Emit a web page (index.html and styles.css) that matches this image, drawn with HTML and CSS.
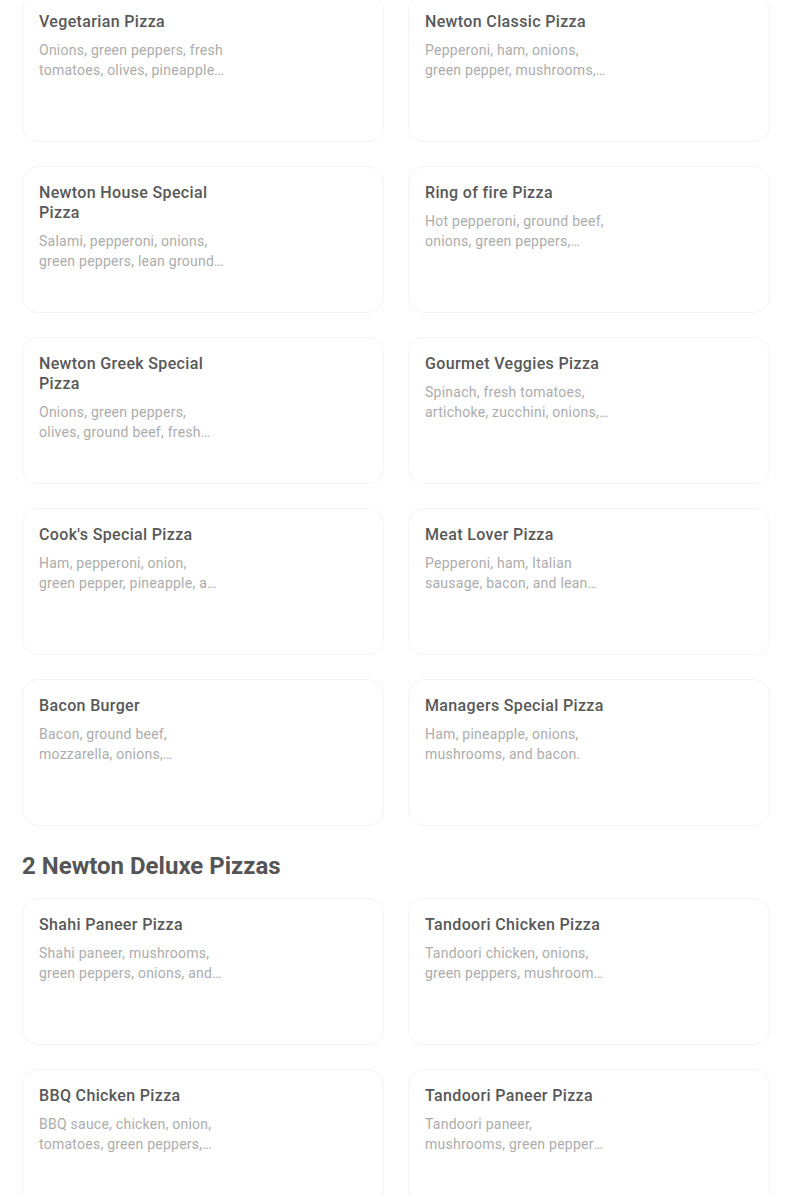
FILE: index.html
```html
<!DOCTYPE html>
<html lang="en">
<head>
<meta charset="utf-8">
<title>Menu</title>
<link rel="stylesheet" href="styles.css">
</head>
<body>
<main class="menu">
  <section class="section">
    <ul class="grid grid-first">
      <li class="card"><div class="card-text"><h3 class="item-title">Vegetarian Pizza</h3><p class="item-desc">Onions, green peppers, fresh tomatoes, olives, pineapple, and mushrooms.</p></div></li>
      <li class="card"><div class="card-text"><h3 class="item-title">Newton Classic Pizza</h3><p class="item-desc">Pepperoni, ham, onions, green pepper, mushrooms, and ground beef.</p></div></li>
      <li class="card"><div class="card-text"><h3 class="item-title">Newton House Special Pizza</h3><p class="item-desc">Salami, pepperoni, onions, green peppers, lean ground beef, and mushrooms.</p></div></li>
      <li class="card"><div class="card-text"><h3 class="item-title">Ring of fire Pizza</h3><p class="item-desc">Hot pepperoni, ground beef, onions, green peppers, jalapeños, and hot sauce.</p></div></li>
      <li class="card"><div class="card-text"><h3 class="item-title">Newton Greek Special Pizza</h3><p class="item-desc">Onions, green peppers, olives, ground beef, fresh tomatoes, and feta cheese.</p></div></li>
      <li class="card"><div class="card-text"><h3 class="item-title">Gourmet Veggies Pizza</h3><p class="item-desc">Spinach, fresh tomatoes, artichoke, zucchini, onions, and mushrooms.</p></div></li>
      <li class="card"><div class="card-text"><h3 class="item-title">Cook's Special Pizza</h3><p class="item-desc">Ham, pepperoni, onion, green pepper, pineapple, and mushrooms.</p></div></li>
      <li class="card"><div class="card-text"><h3 class="item-title">Meat Lover Pizza</h3><p class="item-desc">Pepperoni, ham, Italian sausage, bacon, and lean ground beef.</p></div></li>
      <li class="card"><div class="card-text"><h3 class="item-title">Bacon Burger</h3><p class="item-desc">Bacon, ground beef, mozzarella, onions, tomatoes, and pickles.</p></div></li>
      <li class="card"><div class="card-text"><h3 class="item-title">Managers Special Pizza</h3><p class="item-desc">Ham, pineapple, onions, mushrooms, and bacon.</p></div></li>
    </ul>
  </section>
  <section class="section">
    <h2 class="section-title">2 Newton Deluxe Pizzas</h2>
    <ul class="grid">
      <li class="card"><div class="card-text"><h3 class="item-title">Shahi Paneer Pizza</h3><p class="item-desc">Shahi paneer, mushrooms, green peppers, onions, and tomatoes.</p></div></li>
      <li class="card"><div class="card-text"><h3 class="item-title">Tandoori Chicken Pizza</h3><p class="item-desc">Tandoori chicken, onions, green peppers, mushrooms, and jalapeños.</p></div></li>
      <li class="card"><div class="card-text"><h3 class="item-title">BBQ Chicken Pizza</h3><p class="item-desc">BBQ sauce, chicken, onion, tomatoes, green peppers, and pineapple.</p></div></li>
      <li class="card"><div class="card-text"><h3 class="item-title">Tandoori Paneer Pizza</h3><p class="item-desc">Tandoori paneer, mushrooms, green peppers, onions, and tomatoes.</p></div></li>
    </ul>
  </section>
</main>
</body>
</html>
```
FILE: styles.css
```css
* { box-sizing: border-box; }
html, body { margin: 0; padding: 0; background: #ffffff; }
body {
  font-family: "Roboto", "Liberation Sans", sans-serif;
  color: #545454;
  overflow: hidden;
}
.menu {
  width: 748px;
  margin-left: 22px;
  margin-top: -5px;
}
.grid {
  list-style: none;
  margin: 0;
  padding: 0;
  display: grid;
  grid-template-columns: 362px 362px;
  column-gap: 24px;
  row-gap: 24px;
}
.card {
  height: 147px;
  border: 1px solid #f4f4f4;
  border-radius: 16px;
  padding: 16px;
  display: flex;
  background: #ffffff;
}
.card-text {
  width: 185px;
}
.item-title {
  margin: 0;
  font-size: 16px;
  line-height: 20px;
  font-weight: 500;
  letter-spacing: 0.35px;
  color: #585858;
}
.item-desc {
  margin: 8px 0 0 0;
  font-size: 14px;
  line-height: 20px;
  font-weight: 400;
  letter-spacing: 0.25px;
  color: #acacac;
  display: -webkit-box;
  -webkit-box-orient: vertical;
  -webkit-line-clamp: 2;
  overflow: hidden;
}
.section-title {
  margin: 0;
  padding: 24px 0 16px 0;
  font-size: 24px;
  line-height: 32px;
  font-weight: 700;
  color: #555555;
  letter-spacing: 0;
}
```
